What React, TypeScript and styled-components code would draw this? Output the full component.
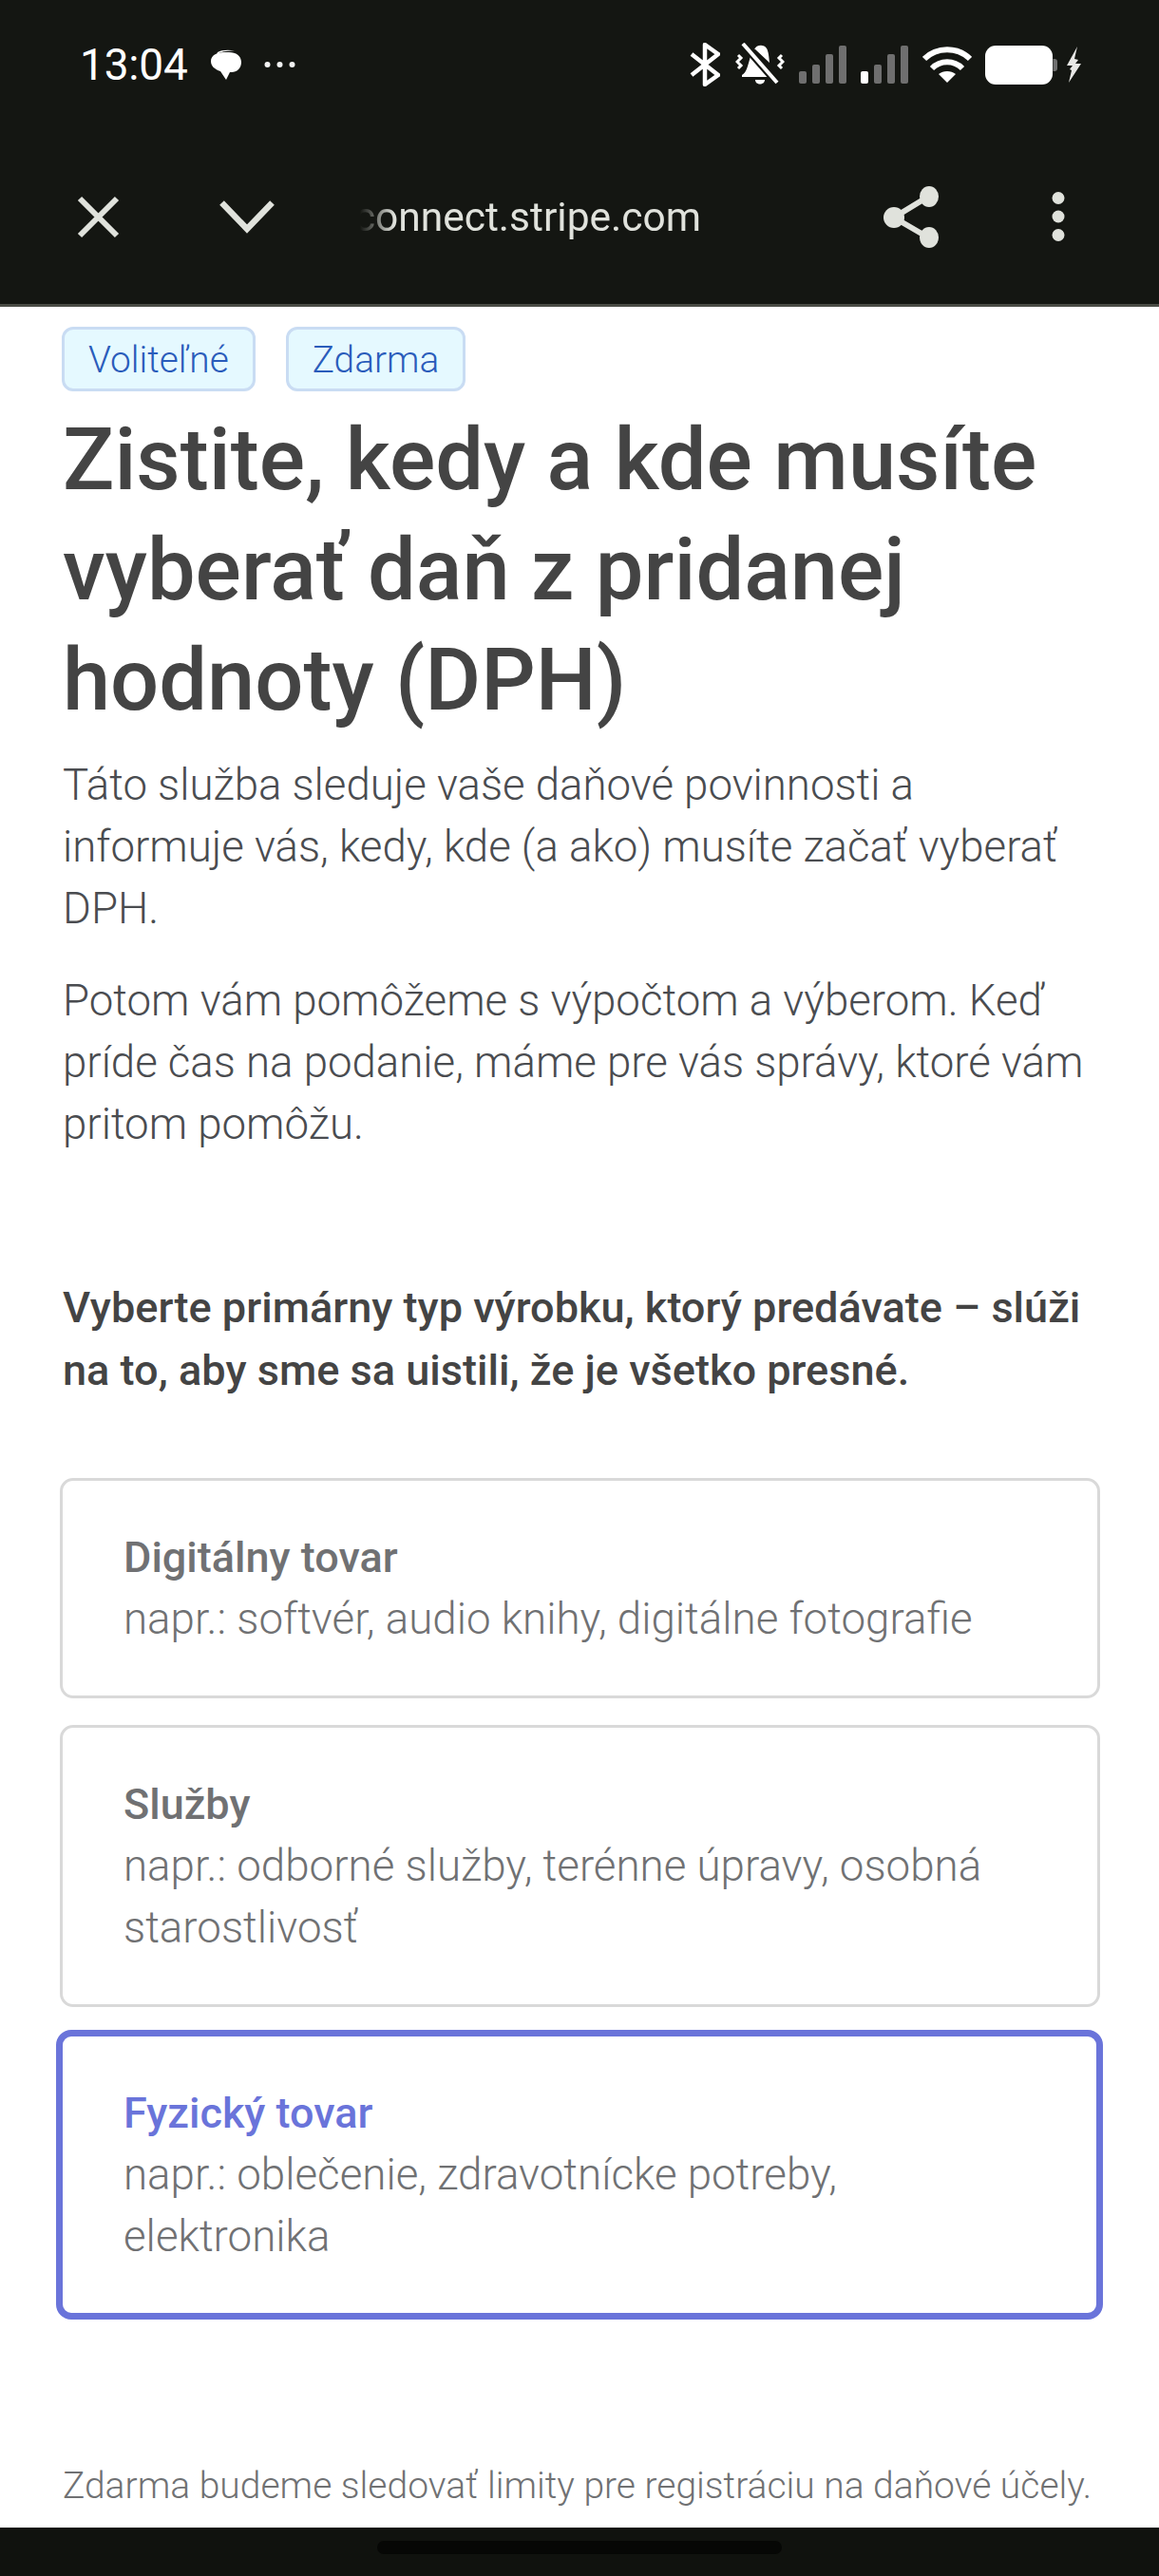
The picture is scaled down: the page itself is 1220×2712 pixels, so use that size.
import styled, { createGlobalStyle } from 'styled-components';

const GlobalStyle = createGlobalStyle`
  html, body {
    margin: 0;
    padding: 0;
    background: #fff;
    font-family: Roboto, "Noto Sans", sans-serif;
  }
`;

const Screen = styled.div`
  width: 1220px;
  height: 2712px;
  display: flex;
  flex-direction: column;
  overflow: hidden;
`;

const Header = styled.header`
  height: 320px;
  flex: none;
  background: #141612;
  border-bottom: 3px solid #4a4c45;
`;

const StatusBar = styled.div`
  height: 136px;
  display: flex;
  align-items: center;
  padding: 0 80px 0 84px;
`;

const Clock = styled.span`
  color: #fff;
  font-size: 46px;
  line-height: 1;
  margin-right: 23px;
  letter-spacing: -0.2px;
`;

const StatusLeft = styled.div`
  display: flex;
  align-items: center;
  gap: 24px;
  height: 46px;
`;

const StatusRight = styled.div`
  margin-left: auto;
  display: flex;
  align-items: center;
`;

const StatusIcon = styled.svg<{ $gap?: number }>`
  display: block;
  flex: none;
  margin-left: ${(p) => p.$gap ?? 0}px;
`;

const Toolbar = styled.div`
  height: 184px;
  display: flex;
  align-items: center;
  padding: 0 97px 0 81px;
`;

const ToolIcon = styled.svg<{ $left?: number }>`
  display: block;
  flex: none;
  margin-left: ${(p) => p.$left ?? 0}px;
`;

const UrlClip = styled.div`
  width: 359px;
  margin-left: 90px;
  padding-top: 2px;
  display: flex;
  justify-content: flex-end;
  overflow: hidden;
  -webkit-mask-image: linear-gradient(to right, transparent 0, #000 36px);
  mask-image: linear-gradient(to right, transparent 0, #000 36px);
`;

const UrlText = styled.span`
  flex: none;
  color: #e0e2dc;
  font-size: 42.5px;
  line-height: 56px;
  white-space: nowrap;
`;

const Main = styled.main`
  flex: 1;
  min-height: 0;
  padding: 21px 62px 16px 66px;
  display: flex;
  flex-direction: column;
  background: #fff;
`;

const Badges = styled.div`
  display: flex;
  gap: 32px;
  margin-left: -1px;
`;

const Badge = styled.span`
  box-sizing: border-box;
  height: 68px;
  padding: 0 25px;
  display: flex;
  align-items: center;
  background: #e5f9ff;
  border: 3px solid #c9dcf3;
  border-radius: 12px;
  color: #2a5cbb;
  font-size: 38.8px;
  font-weight: 350;
`;

const Title = styled.h1`
  margin: 14px 0 20px;
  color: #444;
  font-size: 90.2px;
  line-height: 116px;
  font-weight: 500;
`;

const Paragraph = styled.p`
  margin: 0 0 32px;
  color: #4a4c50;
  font-size: 45.6px;
  line-height: 65px;
  font-weight: 300;
`;

const Lead = styled.p`
  margin: 96px 0 0;
  color: #444;
  font-size: 45.1px;
  line-height: 66px;
  font-weight: 500;
`;

const Options = styled.div`
  margin: 80px 0 0 -3px;
  display: flex;
  flex-direction: column;
  gap: 28px;
`;

const Option = styled.div<{ $selected?: boolean }>`
  box-sizing: border-box;
  padding: 48px 60px 48px 64px;
  border: ${(p) => (p.$selected ? '7px solid #6a74da' : '3px solid #d9d9d9')};
  border-radius: ${(p) => (p.$selected ? 16 : 14)}px;
  margin: ${(p) => (p.$selected ? '-4px -3px -3px -4px' : '0')};
`;

const OptionName = styled.div<{ $selected?: boolean }>`
  color: ${(p) => (p.$selected ? '#6a74da' : '#707173')};
  font-size: 45px;
  line-height: 65px;
  font-weight: 500;
`;

const OptionHint = styled.div`
  color: #707173;
  font-size: 45.7px;
  line-height: 65px;
  font-weight: 300;
`;

const Footnote = styled.p`
  margin: auto -20px 0 0;
  color: #707173;
  font-size: 39px;
  line-height: 56px;
  font-weight: 300;
  white-space: nowrap;
`;

const NavBar = styled.footer`
  height: 51px;
  flex: none;
  background: #10120e;
  display: flex;
  justify-content: center;
  padding-top: 14px;
  box-sizing: border-box;
`;

const HomePill = styled.div`
  width: 426px;
  height: 14px;
  border-radius: 7px;
  background: #060705;
`;

const options = [
  { name: 'Digitálny tovar', hint: 'napr.: softvér, audio knihy, digitálne fotografie' },
  { name: 'Služby', hint: 'napr.: odborné služby, terénne úpravy, osobná starostlivosť' },
  { name: 'Fyzický tovar', hint: 'napr.: oblečenie, zdravotnícke potreby, elektronika', selected: true },
];

const SignalBars = ({ lit, gap }: { lit: boolean; gap: number }) => (
  <StatusIcon $gap={gap} width="50" height="40" viewBox="0 0 50 40">
    <rect x="0" y="27" width="8" height="13" rx="2" fill={lit ? '#fff' : '#6f6f6f'} />
    <rect x="14" y="20" width="8" height="20" rx="2" fill="#6f6f6f" />
    <rect x="28" y="9" width="8" height="31" rx="2" fill="#6f6f6f" />
    <rect x="42" y="0" width="8" height="40" rx="2" fill="#6f6f6f" />
  </StatusIcon>
);

export default function App() {
  return (
    <Screen>
      <GlobalStyle />
      <Header>
        <StatusBar>
          <Clock>13:04</Clock>
          <StatusLeft>
            <svg width="33" height="32" viewBox="0 0 33 32">
              <path d="M8 3C12 .5 20 .2 26 1.500 20 1 12 2 7 5Z" fill="#fff" />
              <path d="M15 3h5c7.500 0 13 4 13 10.500S28 24 23 24h-2l-4 8-6-9C5 21 1 17.500 1 12.500 1 6.500 7 3 15 3z" fill="#fff" />
            </svg>
            <svg width="33" height="8" viewBox="0 0 33 8">
              <circle cx="3.500" cy="4" r="3" fill="#f2f2f2" />
              <circle cx="16.500" cy="4" r="3" fill="#f2f2f2" />
              <circle cx="29.500" cy="4" r="3" fill="#f2f2f2" />
            </svg>
          </StatusLeft>
          <StatusRight>
            <StatusIcon width="32" height="46" viewBox="0 0 32 46">
              <path d="M2 12l28 22-14 10V2l14 10L2 34" fill="none" stroke="#fff" strokeWidth="4.500" strokeLinejoin="round" />
            </StatusIcon>
            <StatusIcon $gap={16} width="52" height="46" viewBox="0 0 52 46">
              <path d="M20 7c2-5 10-6 13-1 2 3 2.500 10 3 15L20 6zM16 14l21 22H7v-2c5-3 6-9 9-20zM21 39h10c0 6-10 6-10 0z" fill="#fff" />
              <path d="M8 1l36 41" stroke="#141612" strokeWidth="8" />
              <path d="M8 1l36 41" stroke="#fff" strokeWidth="4" />
              <path d="M3 13l3 3-4 4 4 4-3 3M49 13l-3 3 4 4-4 4 3 3" fill="none" stroke="#fff" strokeWidth="3" />
            </StatusIcon>
            <SignalBars lit={false} gap={15} />
            <SignalBars lit gap={15} />
            <StatusIcon $gap={15} width="52" height="38" viewBox="0 0 52 38">
              <path d="M2 13C15 0 37 0 50 13" fill="none" stroke="#fff" strokeWidth="6" />
              <path d="M10 23c9-9 23-9 32 0" fill="none" stroke="#fff" strokeWidth="6" />
              <path d="M17 29c5-4 13-4 18 0L26 38z" fill="#fff" />
            </StatusIcon>
            <StatusIcon $gap={14} width="76" height="41" viewBox="0 0 76 41">
              <rect x="0" y="0" width="71" height="41" rx="11" fill="#fff" />
              <path d="M71.500 14h1.500a3 3 0 0 1 3 3v7a3 3 0 0 1-3 3h-1.500z" fill="#6f6f6f" />
            </StatusIcon>
            <StatusIcon $gap={9} width="18" height="38" viewBox="0 0 18 38">
              <path d="M12 0L1 20h6l-3 4 2 1-3 13 13-20h-6l3-4-4-1z" fill="#e8e8e6" />
            </StatusIcon>
          </StatusRight>
        </StatusBar>
        <Toolbar>
          <ToolIcon width="45" height="45" viewBox="0 0 45 45">
            <path d="M3 3l39 39M42 3L3 42" stroke="#e0e2dc" strokeWidth="6" />
          </ToolIcon>
          <ToolIcon $left={105} width="58" height="36" viewBox="0 0 58 36">
            <path d="M2.500 3.500L29 31 55.500 3.500" fill="none" stroke="#e0e2dc" strokeWidth="6.500" />
          </ToolIcon>
          <UrlClip>
            <UrlText>connect.stripe.com</UrlText>
          </UrlClip>
          <ToolIcon $left={192} width="58" height="65" viewBox="0 0 58 65">
            <path d="M47 11L11 33l36 21" fill="none" stroke="#e0e2dc" strokeWidth="6" />
            <ellipse cx="48" cy="11" rx="10" ry="11" fill="#e0e2dc" />
            <ellipse cx="11" cy="33" rx="11" ry="11" fill="#e0e2dc" />
            <ellipse cx="48" cy="54" rx="10" ry="11" fill="#e0e2dc" />
          </ToolIcon>
          <ToolIcon $left={119} width="14" height="52" viewBox="0 0 14 52">
            <circle cx="7" cy="6.500" r="6.500" fill="#e0e2dc" />
            <circle cx="7" cy="26" r="6.500" fill="#e0e2dc" />
            <circle cx="7" cy="45.500" r="6.500" fill="#e0e2dc" />
          </ToolIcon>
        </Toolbar>
      </Header>
      <Main>
        <Badges>
          <Badge>Voliteľné</Badge>
          <Badge>Zdarma</Badge>
        </Badges>
        <Title>Zistite, kedy a kde musíte vyberať daň z pridanej hodnoty (DPH)</Title>
        <Paragraph>Táto služba sleduje vaše daňové povinnosti a informuje vás, kedy, kde (a ako) musíte začať vyberať DPH.</Paragraph>
        <Paragraph>Potom vám pomôžeme s výpočtom a výberom. Keď príde čas na podanie, máme pre vás správy, ktoré vám pritom pomôžu.</Paragraph>
        <Lead>Vyberte primárny typ výrobku, ktorý predávate – slúži na to, aby sme sa uistili, že je všetko presné.</Lead>
        <Options>
          {options.map((o) => (
            <Option key={o.name} $selected={o.selected}>
              <OptionName $selected={o.selected}>{o.name}</OptionName>
              <OptionHint>{o.hint}</OptionHint>
            </Option>
          ))}
        </Options>
        <Footnote>Zdarma budeme sledovať limity pre registráciu na daňové účely.</Footnote>
      </Main>
      <NavBar>
        <HomePill />
      </NavBar>
    </Screen>
  );
}
